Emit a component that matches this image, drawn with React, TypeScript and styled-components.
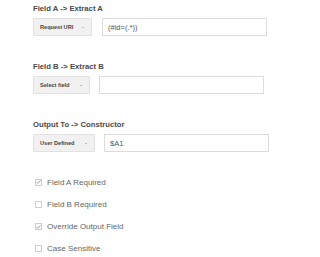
import React from 'react';
import styled, { createGlobalStyle } from 'styled-components';

const GlobalStyle = createGlobalStyle`
  html, body {
    margin: 0;
    padding: 0;
    background: #ffffff;
  }
  body {
    font-family: 'Liberation Sans', Arial, sans-serif;
  }
`;

type Field = {
  title: string;
  select: string;
  selectWidth: number;
  inputGap: number;
  value: string;
};

const FIELDS: Field[] = [
  { title: 'Field A -> Extract A', select: 'Request URI', selectWidth: 59, inputGap: 10, value: '(#id=(.*))' },
  { title: 'Field B -> Extract B', select: 'Select field', selectWidth: 57, inputGap: 9, value: '' },
  { title: 'Output To -> Constructor', select: 'User Defined', selectWidth: 62, inputGap: 9, value: '$A1' },
];

const OPTIONS = [
  { label: 'Field A Required', checked: true },
  { label: 'Field B Required', checked: false },
  { label: 'Override Output Field', checked: true },
  { label: 'Case Sensitive', checked: false },
];

const App: React.FC = () => {
  return (
    <>
      <GlobalStyle />
      <Form>
        {FIELDS.map((field) => (
          <Section key={field.title}>
            <Title>{field.title}</Title>
            <Row gap={field.inputGap}>
              <SelectButton width={field.selectWidth}>
                <span>{field.select}</span>
                <Caret />
              </SelectButton>
              <TextInput>{field.value}</TextInput>
            </Row>
          </Section>
        ))}
        <Options>
          {OPTIONS.map((opt) => (
            <OptionRow key={opt.label}>
              <Box>
                {opt.checked && (
                  <svg width="7" height="6" viewBox="0 0 7 6">
                    <path d="M0.8 3.2 L2.6 5 L6.4 0.8" fill="none" stroke="#777" strokeWidth="1" />
                  </svg>
                )}
              </Box>
              <Label>{opt.label}</Label>
            </OptionRow>
          ))}
        </Options>
      </Form>
    </>
  );
};

export default App;

const Form = styled.div`
  padding: 4px 0 0 33px;
`;

const Section = styled.div`
  margin-bottom: 26px;
`;

const Title = styled.div`
  font-size: 7.7px;
  font-weight: 700;
  color: #4a4a4a;
  line-height: 9px;
  margin-bottom: 5px;
`;

const Row = styled.div<{ gap: number }>`
  display: flex;
  align-items: stretch;
  gap: ${(props) => props.gap}px;
  height: 18px;
`;

const SelectButton = styled.div<{ width: number }>`
  box-sizing: border-box;
  width: ${(props) => props.width}px;
  display: flex;
  align-items: center;
  justify-content: space-between;
  padding: 0 7px 0 6px;
  background: #f1f1f1;
  border: 1px solid #e2e2e2;
  border-radius: 1px;
  font-size: 5.6px;
  font-weight: 700;
  color: #444;
  white-space: nowrap;
`;

const Caret = styled.span`
  width: 0;
  height: 0;
  margin-top: 1px;
  border-left: 1.5px solid transparent;
  border-right: 1.5px solid transparent;
  border-top: 1.5px solid #888;
`;

const TextInput = styled.div`
  box-sizing: border-box;
  width: 165px;
  display: flex;
  align-items: center;
  padding: 0 5px;
  border: 1px solid #dcdcdc;
  font-size: 7.5px;
  color: #555;
`;

const Options = styled.div`
  display: flex;
  flex-direction: column;
  gap: 12.3px;
  margin-top: -1px;
`;

const OptionRow = styled.div`
  display: flex;
  align-items: center;
  height: 10px;
  padding-left: 2px;
`;

const Box = styled.div`
  box-sizing: border-box;
  width: 7px;
  height: 7px;
  border: 1px solid #cfcfcf;
  margin-right: 5px;
  display: flex;
  align-items: center;
  justify-content: center;
`;

const Label = styled.span`
  font-size: 8px;
  color: #666;
`;
